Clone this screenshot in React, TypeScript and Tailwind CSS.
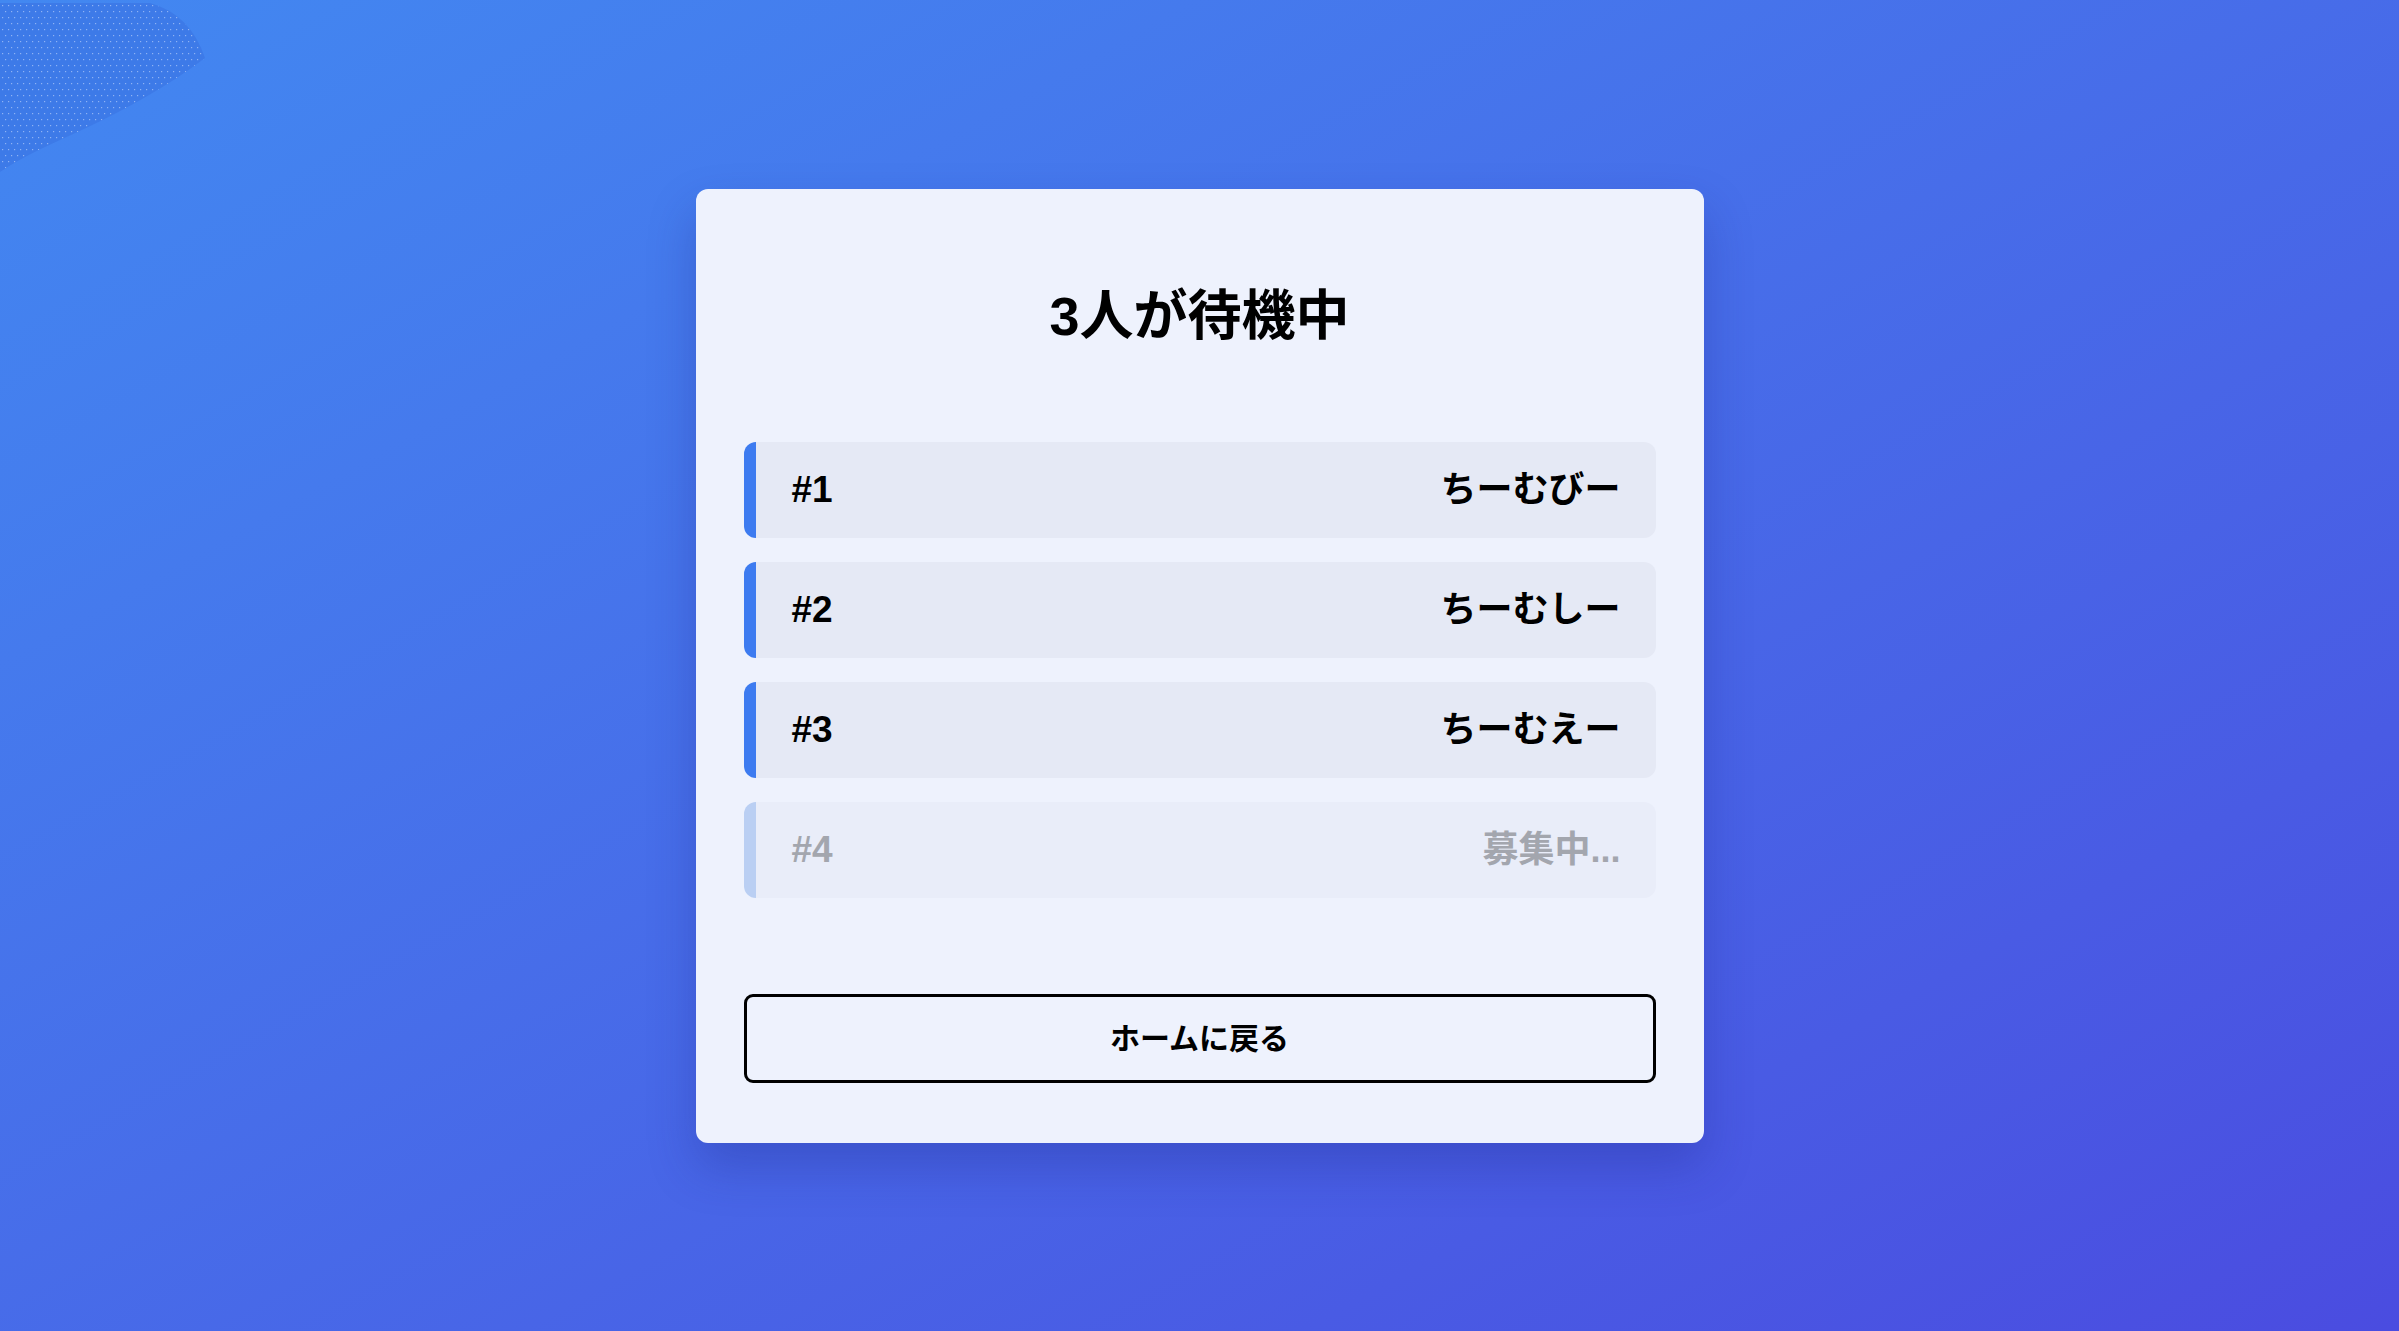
import React from 'react';

interface Slot {
  id: number;
  name?: string;
}

const slots: Slot[] = [
  { id: 1, name: 'ちーむびー' },
  { id: 2, name: 'ちーむしー' },
  { id: 3, name: 'ちーむえー' },
  { id: 4 },
];

// decorative dotted blob in the top-left corner
function CornerDots() {
  const dots: React.ReactElement[] = [];
  for (let y = 5; y < 170; y += 6) {
    for (let x = 2; x < 210; x += 6) {
      const off = (Math.floor(y / 6) % 2) * 3;
      dots.push(<rect key={`${x}-${y}`} x={x + off} y={y} width={1.2} height={1.2} />);
    }
  }
  return (
    <svg className="pointer-events-none absolute left-0 top-0" width="220" height="180" viewBox="0 0 220 180">
      <defs>
        <clipPath id="blob">
          <path d="M0 3 L150 3 Q190 14 205 58 Q150 100 60 140 Q20 158 0 172 Z" />
        </clipPath>
      </defs>
      <path d="M0 3 L150 3 Q190 14 205 58 Q150 100 60 140 Q20 158 0 172 Z" fill="#3d7ae8" />
      <g clipPath="url(#blob)" fill="#8fb3f4">
        {dots}
      </g>
    </svg>
  );
}

export default function App() {
  return (
    <div
      className="relative flex min-h-screen w-full items-center justify-center overflow-hidden bg-linear-to-br from-[#4288f1] to-[#4a4ce0]"
      style={{ fontFamily: '"Liberation Sans", "Noto Sans CJK JP", sans-serif' }}
    >
      <CornerDots />

      <div className="flex w-[1008px] flex-col rounded-[12px] bg-[#eef2fd] px-[48px] pt-[97px] pb-[60px] shadow-[0_24px_48px_rgba(30,40,140,0.3)]">
        <h1 className="h-[60px] text-center text-[54px] leading-[60px] font-bold text-black">3人が待機中</h1>

        <div className="mt-[96px] flex flex-col gap-[24px]">
          {slots.map((slot) =>
            slot.name ? (
              <div
                key={slot.id}
                className="flex h-[96px] items-center justify-between rounded-[12px] border-l-[12px] border-[#3d7bf0] bg-[#e5e9f5] pl-[36px] pr-[35px]"
              >
                <span className="text-[37px] font-bold text-black">#{slot.id}</span>
                <span className="text-[36px] font-bold text-black">{slot.name}</span>
              </div>
            ) : (
              <div
                key={slot.id}
                className="flex h-[96px] items-center justify-between rounded-[12px] border-l-[12px] border-[#bacff3] bg-[#e9edf9] pl-[36px] pr-[35px]"
              >
                <span className="text-[37px] font-bold text-[#a3a6ae]">#{slot.id}</span>
                <span className="text-[36px] font-bold text-[#a3a6ae]">募集中...</span>
              </div>
            )
          )}
        </div>

        <button className="mt-[96px] h-[89px] w-full rounded-[9px] border-[3px] border-black bg-transparent text-[30px] font-bold text-black">
          ホームに戻る
        </button>
      </div>
    </div>
  );
}
